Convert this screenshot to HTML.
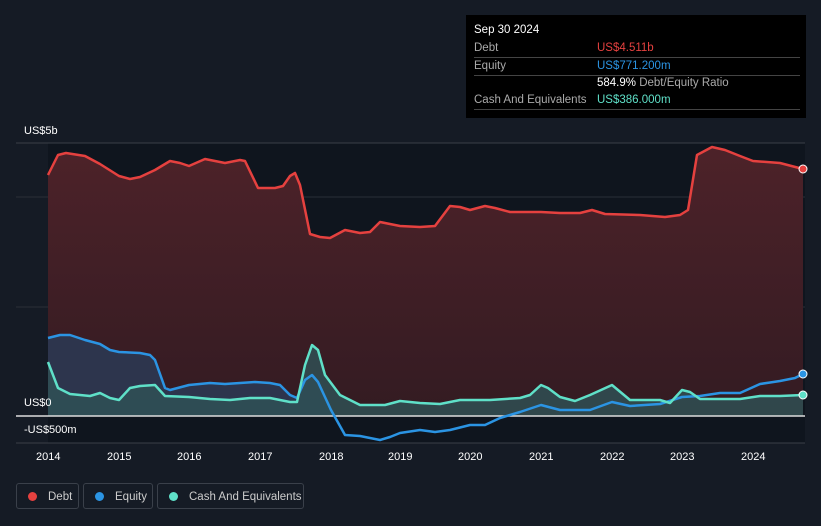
<!DOCTYPE html><html><head><style>
body{margin:0;width:821px;height:526px;background:#151b25;font-family:"Liberation Sans",sans-serif;overflow:hidden;position:relative}
.t{position:absolute;color:#fff;font-size:11px}
.tip{position:absolute;left:466px;top:15px;width:340px;height:103px;background:#000;}
.tip .r{position:absolute;left:8px;width:326px;border-bottom:1px solid #444;font-size:11.5px;color:#aaa;height:17px;line-height:17px}
.leg{position:absolute;top:483px;height:26px;border:1px solid #3a404a;border-radius:3px;color:#ccc;font-size:11.5px;line-height:26px;box-sizing:border-box}
.leg i{display:inline-block;width:9px;height:9px;border-radius:50%;margin:0 11px 0 11px;vertical-align:-1px}
</style></head><body>
<svg width="821" height="526" style="position:absolute;left:0;top:0">
<defs>
<linearGradient id="dg" x1="0" y1="0" x2="0" y2="1"><stop offset="0" stop-color="#4d2229"/><stop offset="1" stop-color="#331b22"/></linearGradient>
</defs>
<rect x="48" y="143" width="757" height="300" fill="#0f151e"/>
<line x1="16" y1="143" x2="805" y2="143" stroke="#3a3f48"/>
<line x1="16" y1="197" x2="805" y2="197" stroke="#2a2f38"/>
<line x1="16" y1="307" x2="805" y2="307" stroke="#2a2f38"/>
<line x1="16" y1="443" x2="805" y2="443" stroke="#3a3f48"/>
<polygon fill="url(#dg)" points="48,416 48,175 58,155 66,153 85,156 100,164 119,176 130,179 140,177 155,170 170,161 180,163 189,166 205,159 215,161 225,163 240,160 245,161 258,188 275,188 283,186 290,176 295,173 300,185 310,234 320,237 330,238 345,230 360,233 370,232 380,222 390,224 400,226 420,227 435,226 450,206 460,207 470,210 485,206 495,208 510,212 541,212 560,213 580,213 592,210 605,214 640,215 665,217 680,215 688,210 697,155 712,147 725,150 740,156 753,161 780,163 803,169 803,416"/>
<polygon fill="#2c3a55" fill-opacity="0.85" points="48,416 48,338 60,335 70,335 85,340 100,344 110,350 119,352 140,353 150,355 155,360 165,388 170,390 189,385 210,383 225,384 240,383 255,382 270,383 280,385 290,395 297,398 305,380 312,375 318,382 331,410 335,416"/>
<polygon fill="#2f5256" fill-opacity="0.8" points="48,416 48,362 58,388 70,394 90,396 100,393 110,398 119,400 130,388 140,386 155,385 165,396 189,397 210,399 230,400 250,398 270,398 290,402 297,402 305,365 312,345 318,350 325,375 340,395 360,405 385,405 400,401 420,403 440,404 460,400 490,400 520,398 530,395 541,385 548,388 560,397 575,401 590,395 612,385 630,400 660,400 670,403 682,390 690,392 700,399 740,399 760,396 780,396 803,395 803,416"/>
<line x1="16" y1="416" x2="805" y2="416" stroke="#ddd" stroke-width="1.5"/>
<g fill="none" stroke-width="2.5" stroke-linejoin="round">
<polyline stroke="#e5413f" points="48,175 58,155 66,153 85,156 100,164 119,176 130,179 140,177 155,170 170,161 180,163 189,166 205,159 215,161 225,163 240,160 245,161 258,188 275,188 283,186 290,176 295,173 300,185 310,234 320,237 330,238 345,230 360,233 370,232 380,222 390,224 400,226 420,227 435,226 450,206 460,207 470,210 485,206 495,208 510,212 541,212 560,213 580,213 592,210 605,214 640,215 665,217 680,215 688,210 697,155 712,147 725,150 740,156 753,161 780,163 803,169"/>
<polyline stroke="#2b94e3" points="48,338 60,335 70,335 85,340 100,344 110,350 119,352 140,353 150,355 155,360 165,388 170,390 189,385 210,383 225,384 240,383 255,382 270,383 280,385 290,395 297,398 305,380 312,375 318,382 331,410 345,435 360,436 370,438 380,440 390,437 400,433 420,430 435,432 450,430 470,425 485,425 500,418 520,412 541,405 560,410 590,410 612,402 630,406 660,404 682,397 700,396 720,393 740,393 760,384 780,381 795,378 803,374"/>
<polyline stroke="#5fe0c8" points="48,362 58,388 70,394 90,396 100,393 110,398 119,400 130,388 140,386 155,385 165,396 189,397 210,399 230,400 250,398 270,398 290,402 297,402 305,365 312,345 318,350 325,375 340,395 360,405 385,405 400,401 420,403 440,404 460,400 490,400 520,398 530,395 541,385 548,388 560,397 575,401 590,395 612,385 630,400 660,400 670,403 682,390 690,392 700,399 740,399 760,396 780,396 803,395"/>
</g>
<circle cx="803" cy="169" r="4" fill="#e5413f" stroke="#fff" stroke-width="1"/>
<circle cx="803" cy="374" r="4" fill="#2b94e3" stroke="#fff" stroke-width="1"/>
<circle cx="803" cy="395" r="4" fill="#5fe0c8" stroke="#fff" stroke-width="1"/>
</svg>
<div class="t" style="left:24px;top:125px">US$5b</div>
<div class="t" style="left:24px;top:397px">US$0</div>
<div class="t" style="left:24px;top:424px">-US$500m</div>
<div class="t" style="left:36px;top:451px">2014</div><div class="t" style="left:107px;top:451px">2015</div><div class="t" style="left:177px;top:451px">2016</div><div class="t" style="left:248px;top:451px">2017</div><div class="t" style="left:319px;top:451px">2018</div><div class="t" style="left:388px;top:451px">2019</div><div class="t" style="left:458px;top:451px">2020</div><div class="t" style="left:529px;top:451px">2021</div><div class="t" style="left:600px;top:451px">2022</div><div class="t" style="left:670px;top:451px">2023</div><div class="t" style="left:741px;top:451px">2024</div>
<div class="tip">
<div style="position:absolute;left:8px;top:9px;color:#fff;font-size:11.5px">Sep 30 2024</div>
<div class="r" style="top:25px">Debt<span style="position:absolute;left:123px;color:#e5413f">US$4.511b</span></div>
<div class="r" style="top:43px">Equity<span style="position:absolute;left:123px;color:#2b94e3">US$771.200m</span></div>
<div class="r" style="top:60px;border:none"><span style="position:absolute;left:123px"><b style="color:#fff;font-weight:normal">584.9%</b> Debt/Equity Ratio</span></div>
<div class="r" style="top:77px">Cash And Equivalents<span style="position:absolute;left:123px;color:#5fe0c8">US$386.000m</span></div>
</div>
<div class="leg" style="left:16px;width:63px"><i style="background:#e5413f"></i>Debt</div>
<div class="leg" style="left:83px;width:70px"><i style="background:#2b94e3"></i>Equity</div>
<div class="leg" style="left:157px;width:147px"><i style="background:#5fe0c8"></i>Cash And Equivalents</div>
</body></html>
